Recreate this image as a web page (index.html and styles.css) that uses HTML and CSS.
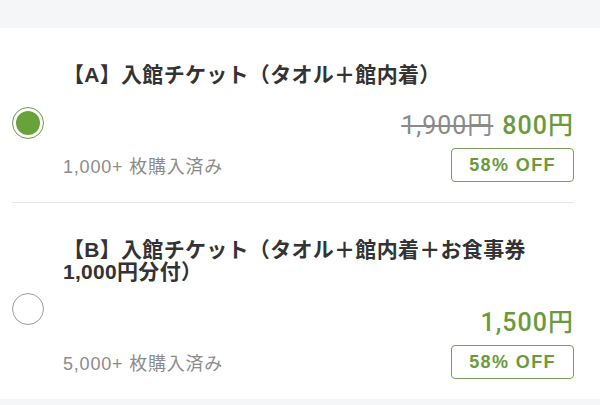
FILE: index.html
```html
<!DOCTYPE html>
<html lang="ja">
<head>
<meta charset="utf-8">
<title>チケット選択</title>
<link rel="stylesheet" href="styles.css">
</head>
<body>
<div class="list">
  <div class="option">
    <span class="radio radio-on"></span>
    <div class="body">
      <div class="title">【A】入館チケット（タオル＋館内着）</div>
      <div class="price"><span class="was">1,900円</span><span class="now">800円</span></div>
      <div class="meta">
        <span class="sold">1,000+ 枚購入済み</span>
        <span class="badge">58% OFF</span>
      </div>
    </div>
  </div>
  <div class="option">
    <span class="radio"></span>
    <div class="body">
      <div class="title">【B】入館チケット（タオル＋館内着＋お食事券1,000円分付）</div>
      <div class="price"><span class="now">1,500円</span></div>
      <div class="meta">
        <span class="sold">5,000+ 枚購入済み</span>
        <span class="badge">58% OFF</span>
      </div>
    </div>
  </div>
</div>
</body>
</html>
```

FILE: styles.css
```css
html, body {
  margin: 0;
  padding: 0;
}

body {
  background: #f5f6f8;
  font-family: "Liberation Sans", "Noto Sans CJK JP", sans-serif;
  color: #333;
}

.list {
  margin-top: 28px;
  background: #fff;
  padding: 0 26px 0 12px;
}

.option {
  display: flex;
  align-items: center;
  padding: 36px 0 20px;
}

.option + .option {
  border-top: 1px solid #e6e6e6;
}

.radio {
  flex: none;
  width: 32px;
  height: 32px;
  box-sizing: border-box;
  border-radius: 50%;
  border: 1.5px solid #9d9d9d;
  display: flex;
  align-items: center;
  justify-content: center;
}

.radio-on {
  border-color: #6f9a45;
}

.radio-on::after {
  content: "";
  width: 24px;
  height: 24px;
  border-radius: 50%;
  background: #6aa23a;
}

.body {
  flex: 1;
  min-width: 0;
  margin-left: 19px;
}

.title {
  font-size: 21px;
  line-height: 22px;
  font-weight: 700;
  letter-spacing: 0.3px;
  color: #333;
}

.price {
  margin-top: 26px;
  text-align: right;
  font-family: "Roboto", "Noto Sans CJK JP", sans-serif;
  font-size: 25px;
  line-height: 28px;
  letter-spacing: 1px;
}

.was {
  color: #8a8a8a;
  font-weight: 400;
  text-decoration: line-through;
  margin-right: 9px;
}

.now {
  color: #6a9a3c;
  font-weight: 500;
}

.meta {
  margin-top: 8px;
  display: flex;
  justify-content: space-between;
  align-items: center;
}

.sold {
  font-size: 18px;
  color: #8c8c8c;
  letter-spacing: 0.8px;
}

.badge {
  height: 34px;
  box-sizing: border-box;
  border: 1.5px solid #7a9e55;
  border-radius: 4px;
  padding: 0 17px;
  display: flex;
  align-items: center;
  font-size: 18px;
  font-weight: 700;
  letter-spacing: 1.4px;
  color: #6a9a3c;
}
```
